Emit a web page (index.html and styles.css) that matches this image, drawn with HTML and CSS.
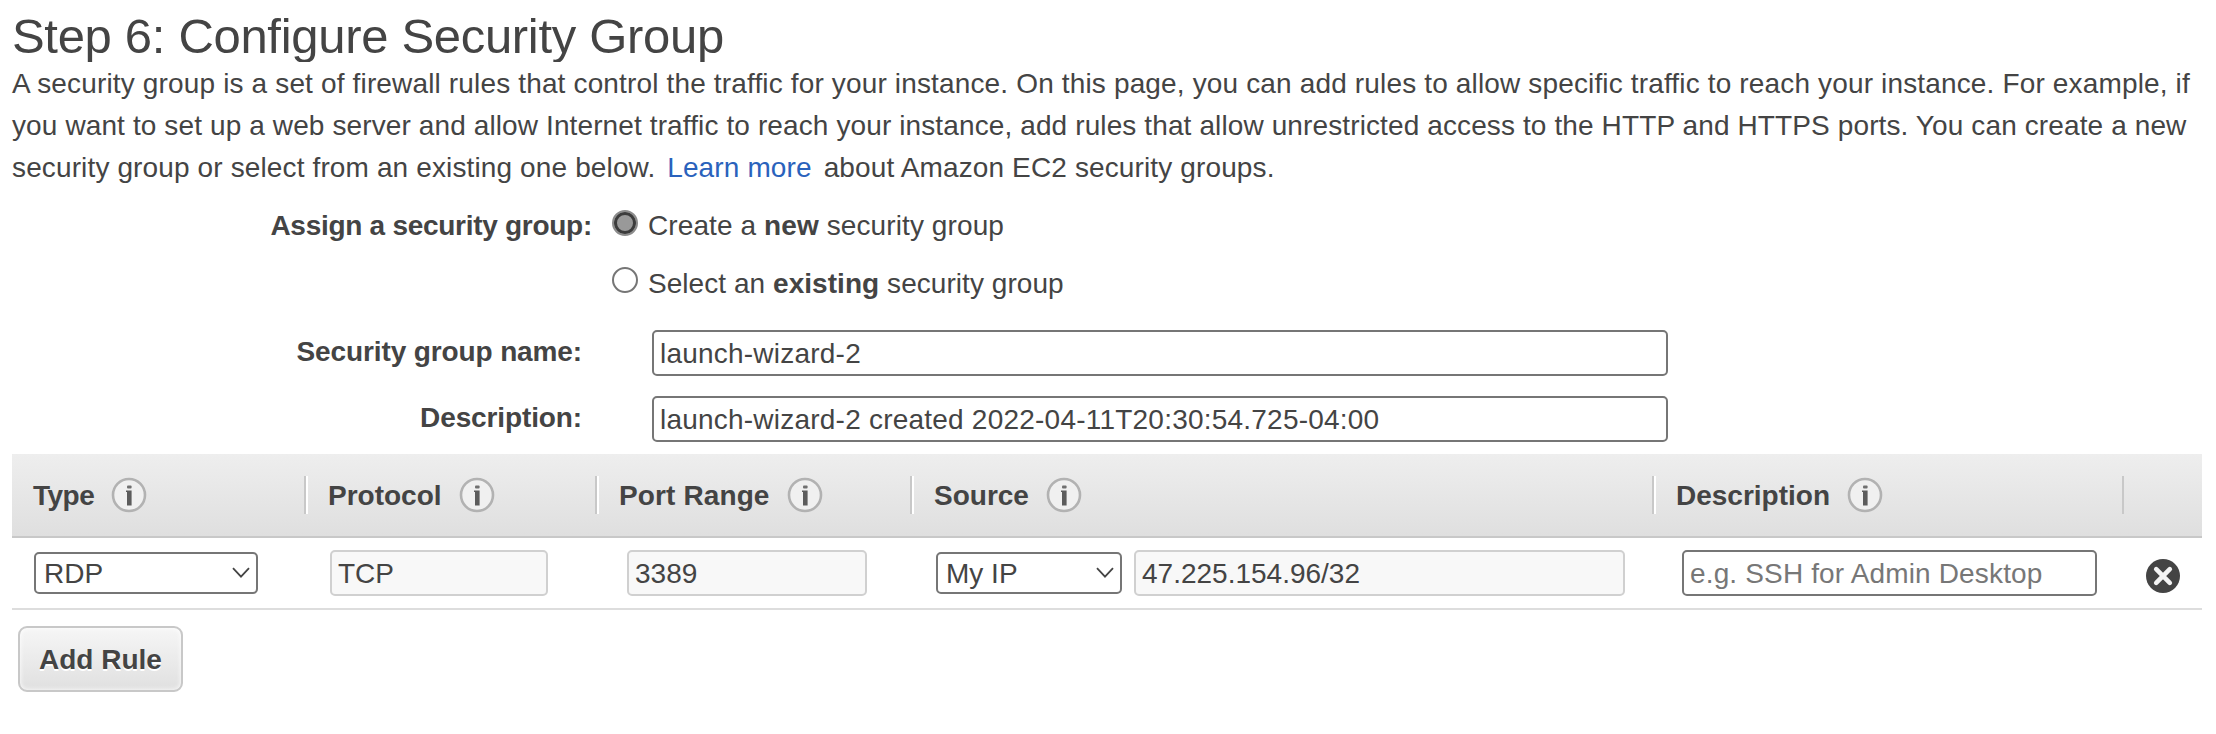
FILE: index.html
```html
<!DOCTYPE html>
<html lang="en">
<head>
<meta charset="utf-8">
<title>Configure Security Group</title>
<link rel="stylesheet" href="styles.css">
</head>
<body>
<svg class="defs" width="0" height="0">
  <symbol id="info" viewBox="0 0 36 36">
    <circle cx="18" cy="18" r="16" fill="#f0f0f0" stroke="#b2b2b2" stroke-width="2.6"/>
    <rect x="16" y="8.4" width="4.6" height="3.2" rx="1" fill="#707070"/>
    <path d="M15 13.4H20.6V28.4H16V15H15Z" fill="#5c5c5c"/>
  </symbol>
  <symbol id="chevron" viewBox="0 0 18 12">
    <path d="M1 1.2 9 9.6 17 1.2" fill="none" stroke="#444" stroke-width="1.8"/>
  </symbol>
</svg>
<h1 class="title">Step 6: Configure Security Group</h1>
<p class="intro">
  <span class="line l1">A security group is a set of firewall rules that control the traffic for your instance. On this page, you can add rules to allow specific traffic to reach your instance. For example, if</span>
  <span class="line l2">you want to set up a web server and allow Internet traffic to reach your instance, add rules that allow unrestricted access to the HTTP and HTTPS ports. You can create a new</span>
  <span class="line l3">security group or select from an existing one below. <a class="link">Learn more</a> about Amazon EC2 security groups.</span>
</p>
<form class="form">
  <div class="choice first"><span class="assign">Assign a security group:</span><span class="radio on"></span><span class="choice-text c1">Create a <b>new</b> security group</span></div>
  <div class="choice second"><span class="assign"></span><span class="radio"></span><span class="choice-text c2">Select an <b>existing</b> security group</span></div>
  <div class="field"><label class="label">Security group name:</label><input class="box" value="launch-wizard-2"></div>
  <div class="field"><label class="label">Description:</label><input class="box" value="launch-wizard-2 created 2022-04-11T20:30:54.725-04:00"></div>
</form>
<section class="rules">
  <div class="grid head">
    <div class="th"><span class="h-type">Type</span><svg class="info"><use href="#info"/></svg></div>
    <div class="th"><span>Protocol</span><svg class="info"><use href="#info"/></svg></div>
    <div class="th"><span class="h-port">Port Range</span><svg class="info"><use href="#info"/></svg></div>
    <div class="th"><span>Source</span><svg class="info"><use href="#info"/></svg></div>
    <div class="th"><span>Description</span><svg class="info"><use href="#info"/></svg></div>
    <div class="th last"></div>
  </div>
  <div class="grid row">
    <div class="td type"><span class="select">RDP<svg class="chevron"><use href="#chevron"/></svg></span></div>
    <div class="td proto"><input class="box off" value="TCP" disabled></div>
    <div class="td port"><input class="box off" value="3389" disabled></div>
    <div class="td source"><span class="select">My IP<svg class="chevron"><use href="#chevron"/></svg></span><input class="box off ip" value="47.225.154.96/32" disabled></div>
    <div class="td note"><input class="box" placeholder="e.g. SSH for Admin Desktop"></div>
    <div class="td remove"><svg width="36" height="36" viewBox="0 0 36 36"><circle cx="18" cy="18" r="17" fill="#444"/><path d="M11.2 11.2 24.8 24.8M24.8 11.2 11.2 24.8" stroke="#f4f4f4" stroke-width="4.6" stroke-linecap="round"/></svg></div>
  </div>
</section>
<button class="add">Add Rule</button>
</body>
</html>
```
FILE: styles.css
```css
* { box-sizing: border-box; }
body {
  margin: 0;
  padding: 0 14px 0 12px;
  background: #fff;
  color: #444;
  font: 28px/42px "Liberation Sans", Arial, sans-serif;
}
.defs { display: block; }
.title {
  margin: 0;
  height: 62px;
  overflow: hidden;
  font-size: 49px;
  font-weight: 400;
  line-height: 72px;
  letter-spacing: -0.31px;
}
.intro { margin: 0; padding-top: 1px; }
.line { display: block; white-space: nowrap; }
.l1 { letter-spacing: 0.152px; }
.l2 { letter-spacing: 0.115px; }
.l3 { letter-spacing: 0.13px; }
.link { color: #2a62bc; margin: 0 4px; }
.choice { display: flex; align-items: center; white-space: nowrap; }
.first { height: 73px; }
.second { height: 43px; }
.assign { width: 580px; padding-top: 1px; text-align: right; font-weight: 700; letter-spacing: -0.28px; }
.choice-text { padding-top: 1px; }
.c1 { letter-spacing: 0.1px; }
.c2 { letter-spacing: 0.05px; }
.radio {
  width: 26px;
  height: 26px;
  margin: 0 10px 6px 20px;
  border: 2px solid #767676;
  border-radius: 50%;
}
.second .radio { margin-bottom: 7px; }
.radio.on { border: 2px solid #8c8c8c; background: #999; box-shadow: inset 0 0 0 3px #3c3c3c; }
.field { display: flex; align-items: center; margin-top: 20px; }
.second + .field { margin-top: 25px; }
.label {
  width: 570px;
  margin: -2px 70px 0 0;
  text-align: right;
  font-weight: 700;
  letter-spacing: -0.12px;
  white-space: nowrap;
}
.box {
  display: block;
  width: 100%;
  height: 46px;
  padding: 1px 6px 0;
  border: 2px solid #767676;
  border-radius: 5px;
  background: #fff;
  color: #444;
  font: inherit;
}
.box::placeholder { color: #777; opacity: 1; }
.field .box { width: 1016px; letter-spacing: 0.22px; }
.box.off { border-color: #d0d0d0; background: #f8f8f8; }
.rules { margin-top: 12px; }
.grid { display: grid; grid-template-columns: 294px 291px 315px 742px 470px 78px; }
.head {
  height: 84px;
  padding-top: 22px;
  border-bottom: 2px solid #c8c8c8;
  background: linear-gradient(#eee, #dfdfdf);
}
.th {
  display: flex;
  align-items: center;
  height: 38px;
  padding-left: 20px;
  border-left: 2px solid #fff;
  border-right: 2px solid #c8c8c8;
  font-weight: 700;
  white-space: nowrap;
}
.th span { padding-top: 1px; }
.th:first-child { border-left: 0; padding-left: 21px; }
.th.last { border: 0; }
.h-type { letter-spacing: -0.5px; }
.h-port { letter-spacing: 0.12px; }
.info { width: 36px; height: 36px; margin-left: 17px; }
.row { height: 72px; border-bottom: 2px solid #ddd; }
.td { display: flex; padding-top: 12px; }
.type { padding-left: 22px; }
.type .select { width: 224px; }
.proto { padding-left: 24px; }
.proto .box { width: 218px; }
.port { padding-left: 30px; }
.port .box { width: 240px; }
.source { padding-left: 24px; }
.source .select { width: 186px; }
.source .ip { width: 491px; margin-left: 12px; }
.note { padding-left: 28px; }
.note .box { width: 415px; letter-spacing: 0.15px; }
.remove { padding: 20px 0 0 21px; }
.select {
  display: flex;
  align-items: center;
  justify-content: space-between;
  height: 42px;
  margin-top: 2px;
  padding: 1px 6px 0 8px;
  border: 2px solid #767676;
  border-radius: 5px;
  white-space: nowrap;
}
.chevron { width: 18px; height: 12px; margin-top: -1px; }
.add {
  display: block;
  width: 165px;
  height: 66px;
  margin: 16px 0 0 6px;
  padding: 1px 0 0;
  border: 2px solid #c8c8c8;
  border-radius: 9px;
  background: linear-gradient(#f6f6f6, #e0e0e0);
  box-shadow: inset 0 0 5px #fff;
  color: #444;
  font: 700 28px "Liberation Sans", Arial, sans-serif;
  text-shadow: 0 2px 0 #fff;
  white-space: nowrap;
}
```
